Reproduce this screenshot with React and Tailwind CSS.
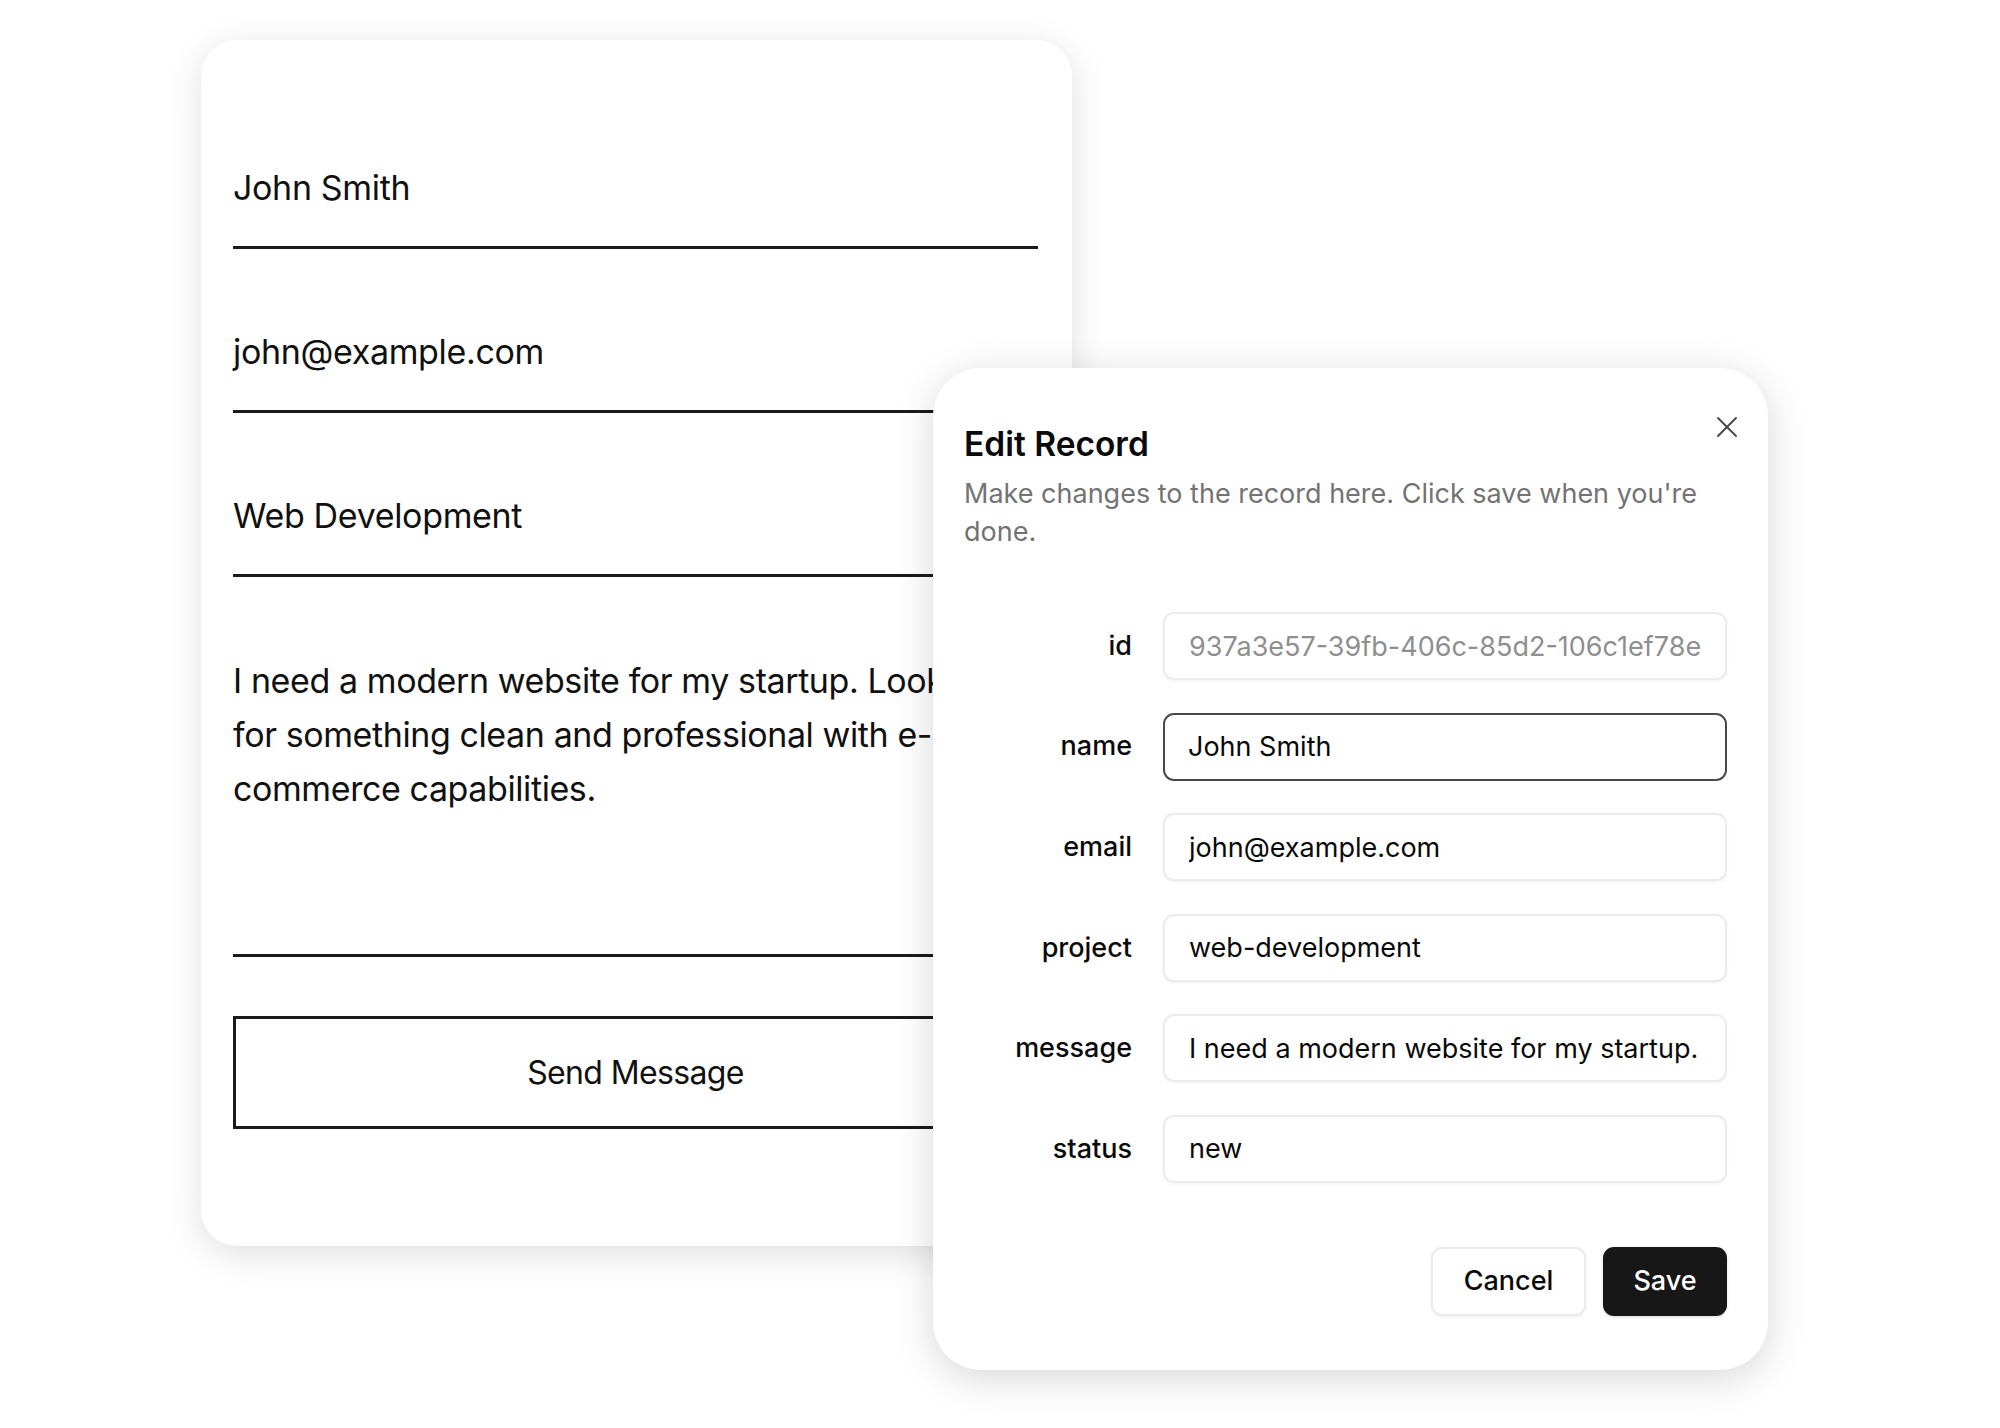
import React from "react";
import { X } from "lucide-react";

const rows = [
  { label: "id", value: "937a3e57-39fb-406c-85d2-106c1ef78ec2", muted: true },
  { label: "name", value: "John Smith", focused: true },
  { label: "email", value: "john@example.com" },
  { label: "project", value: "web-development" },
  { label: "message", value: "I need a modern website for my startup. Looking for something clean and professional with e-commerce capabilities." },
  { label: "status", value: "new" },
];

export default function App() {
  return (
    <div className="relative w-[2000px] h-[1428px] overflow-hidden bg-white pt-[40px] pl-[201px] font-['Inter','Noto_Sans',sans-serif]">
      {/* Contact form card */}
      <div className="w-[871px] rounded-[36px] bg-white shadow-[0_8px_36px_rgba(0,0,0,0.13)] pl-[32px] pr-[34px] pt-[124px] pb-[117px] text-[#111111]">
        <div className="border-b-[3px] border-[#1a1a1a] pb-[34px] text-[34px] leading-[48px] tracking-[-0.01em]">John Smith</div>
        <div className="mt-[79px] border-b-[3px] border-[#1a1a1a] pb-[34px] text-[34px] leading-[48px] tracking-[-0.01em]">john@example.com</div>
        <div className="mt-[79px] border-b-[3px] border-[#1a1a1a] pb-[34px] text-[34px] leading-[48px] tracking-[-0.01em]">Web Development</div>
        <div className="mt-[76px] h-[304px] border-b-[3px] border-[#1a1a1a] pt-[1px] whitespace-nowrap overflow-hidden text-[34px] leading-[54px] tracking-[-0.012em]">
          I need a modern website for my startup. Looking
          <br />
          for something clean and professional with e-
          <br />
          commerce capabilities.
        </div>
        <div className="mt-[59px] flex h-[113px] items-center justify-center border-[3px] border-[#1a1a1a] text-[32px] tracking-[-0.02em]">
          Send Message
        </div>
      </div>

      {/* Edit dialog */}
      <div className="absolute left-[933px] top-[368px] h-[1002px] w-[835px] rounded-[48px] bg-white pl-[31px] pr-[41px] pt-[50px] shadow-[0_8px_40px_rgba(0,0,0,0.16)]">
        <button className="absolute right-[32px] top-[50px] text-[#4a4a4a]">
          <X size={36} strokeWidth={1.3} className="block -m-[9px]" />
        </button>
        <h2 className="text-[33.5px] font-semibold leading-[52px] text-[#0a0a0a]">Edit Record</h2>
        <p className="mt-[5px] text-[27px] leading-[38px] text-[#737373]">
          <span className="whitespace-nowrap">Make changes to the record here. Click save when you're</span>
          <br />
          done.
        </p>
        <div className="mt-[61px] grid grid-cols-[168px_1fr] items-center gap-x-[31px] gap-y-[32.6px]">
          {rows.map((r) => (
            <React.Fragment key={r.label}>
              <label className="text-right text-[27px] font-medium text-[#0a0a0a]">{r.label}</label>
              <input
                readOnly
                value={r.value}
                className={
                  r.focused
                    ? "h-[68px] w-full rounded-[11px] border-[2.5px] border-[#4a4a4a] bg-white px-[23px] text-[27px] text-[#0a0a0a] outline-none"
                    : r.muted
                    ? "h-[68px] w-full rounded-[11px] border-2 border-[#ececec] bg-white px-[24px] text-[27px] text-[#8f8f8f] shadow-[0_1px_3px_rgba(0,0,0,0.06)] outline-none"
                    : "h-[68px] w-full rounded-[11px] border-2 border-[#ececec] bg-white px-[24px] text-[27px] text-[#0a0a0a] shadow-[0_1px_3px_rgba(0,0,0,0.06)] outline-none"
                }
              />
            </React.Fragment>
          ))}
        </div>
        <div className="mt-[64px] flex justify-end gap-[17px]">
          <button className="h-[69px] w-[155px] rounded-[11px] border-2 border-[#ececec] bg-white text-[27px] font-medium text-[#0a0a0a] shadow-[0_1px_3px_rgba(0,0,0,0.08)]">
            Cancel
          </button>
          <button className="h-[69px] w-[124px] rounded-[11px] bg-[#171717] text-[27px] font-medium text-white shadow-[0_1px_3px_rgba(0,0,0,0.15)]">
            Save
          </button>
        </div>
      </div>
    </div>
  );
}
